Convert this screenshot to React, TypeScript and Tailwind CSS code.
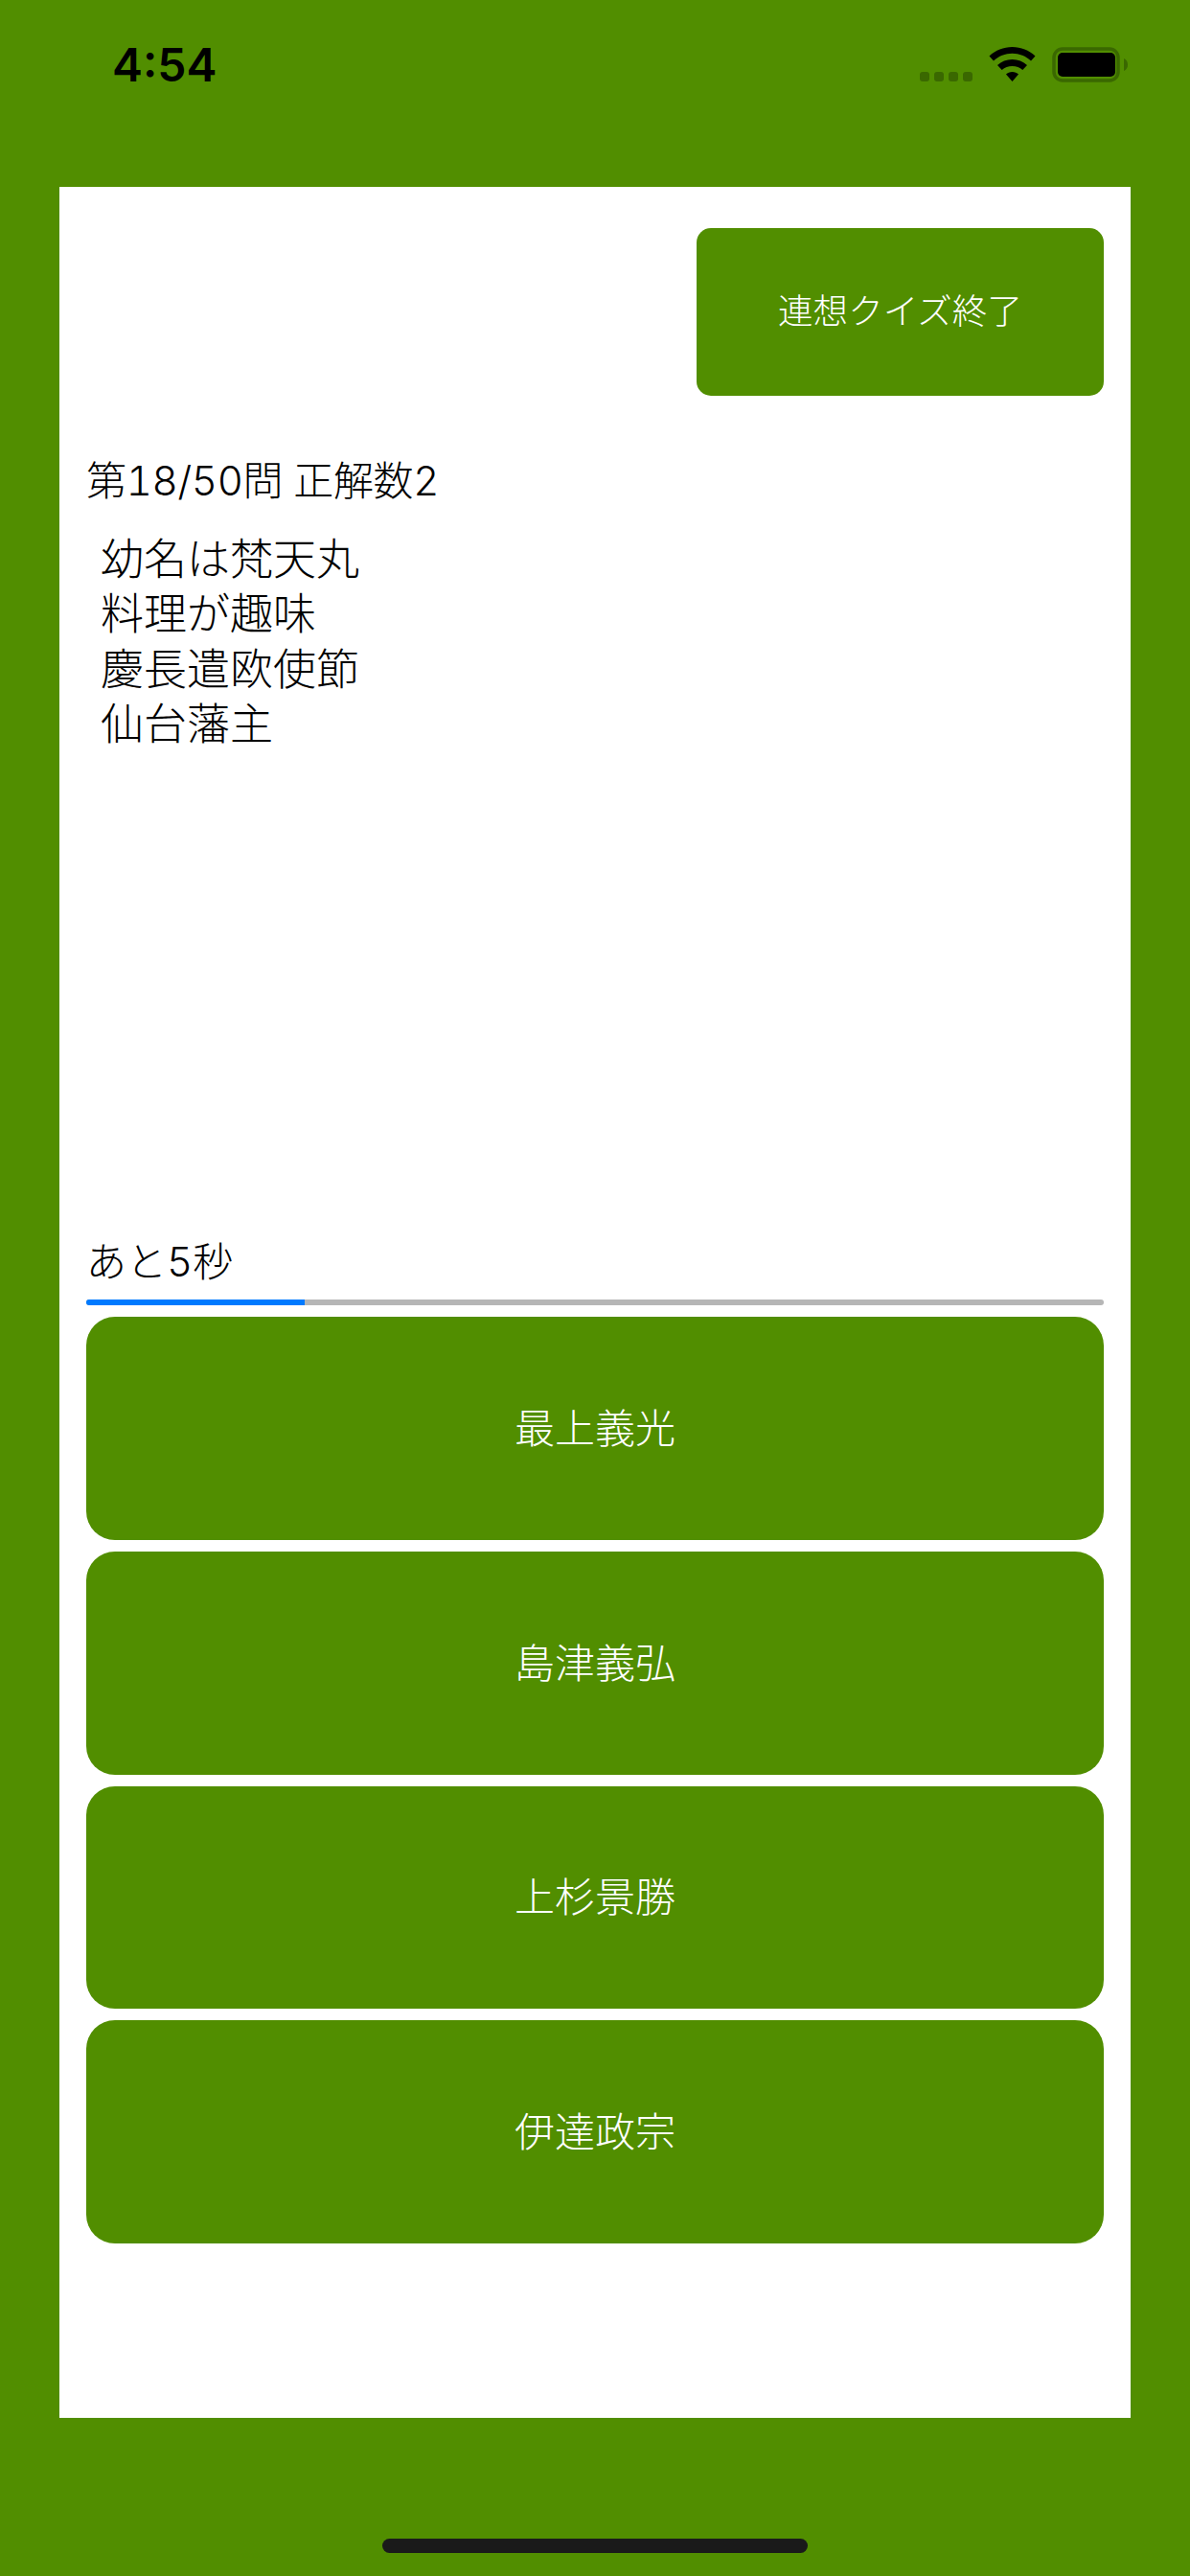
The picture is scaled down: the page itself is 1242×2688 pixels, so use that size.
const CHOICES = ['最上義光', '島津義弘', '上杉景勝', '伊達政宗'];
const HINTS = ['幼名は梵天丸', '料理が趣味', '慶長遣欧使節', '仙台藩主'];

export default function App() {
  return (
    <div className="w-[1242px] h-[2688px] bg-[#518e00] flex flex-col font-['Inter','Noto_Sans_CJK_JP',sans-serif]">
      <StatusBar />

      <main className="mx-[62px] h-[2328px] bg-white px-[28px] flex flex-col">
        <button className="self-end mt-[43px] w-[425px] h-[175px] rounded-[15px] bg-[#518e00] text-white text-[36.6px] font-light">
          連想クイズ終了
        </button>

        <p className="mt-[60px] h-[58px] leading-[58px] text-[42px] tracking-[-0.3px] text-black font-light tabular-nums">第18/50問 正解数2</p>

        <div className="mt-[24px] pl-[15px] text-[45px] leading-[57.25px] text-black font-light">
          {HINTS.map((h) => (
            <p key={h}>{h}</p>
          ))}
        </div>

        <p className="mt-[504px] h-[58px] leading-[58px] text-[42px] text-black font-light tabular-nums">あと5秒</p>

        <div className="mt-[10px] h-[6px] rounded-full bg-[#b6b6b6] overflow-hidden">
          <div className="h-full w-[228px] bg-[#007aff]" />
        </div>

        <div className="mt-[12px] flex flex-col gap-[12px]">
          {CHOICES.map((c) => (
            <button key={c} className="h-[232.75px] rounded-[30px] bg-[#518e00] text-white text-[42px] font-light">
              {c}
            </button>
          ))}
        </div>
      </main>

      {/* home indicator */}
      <div className="flex-1 flex justify-center pt-[126px]">
        <div className="w-[444px] h-[15px] rounded-[8px] bg-[#1a1a1a]" />
      </div>
    </div>
  );
}

function StatusBar() {
  return (
    <div className="h-[195px] shrink-0 pl-[117px] pr-[65px] pt-[49px] flex justify-between items-start">
      <span className="font-['Inter',sans-serif] font-semibold text-[48px] leading-[38px] text-black">4:54</span>
      <div className="flex items-start">
        <div className="mt-[26px] flex gap-[5px]">
          {[0, 1, 2, 3].map((i) => (
            <div key={i} className="w-[10px] h-[10px] rounded-[3px] bg-[#3a6800]" />
          ))}
        </div>
        <svg className="ml-[17px]" width="49" height="36" viewBox="0 0 49 36" fill="#000">
          <path d="M24.5 0C33.5 0 42 3.5 48.5 9.5L44 14.5C38.7 9.6 31.9 6.8 24.5 6.8C17.1 6.8 10.3 9.6 5 14.5L.5 9.5C7 3.5 15.5 0 24.5 0Z" />
          <path d="M24.5 13C30.5 13 35.8 15.2 40 19L35.3 24C32.4 21.5 28.7 20 24.5 20C20.3 20 16.6 21.5 13.7 24L9 19C13.2 15.2 18.5 13 24.5 13Z" />
          <path d="M24.5 26C27 26 29.5 27 31 28.5L24.5 36L18 28.5C19.5 27 22 26 24.5 26Z" />
        </svg>
        <svg className="ml-[17px]" width="79" height="37" viewBox="0 0 79 37">
          <rect x="2" y="2" width="67" height="33" rx="9" fill="none" stroke="#3a6800" strokeWidth="3.5" />
          <rect x="6" y="6" width="60" height="25" rx="5" fill="#000" />
          <path d="M75 12C77.5 13 79 15.5 79 18.5C79 21.5 77.5 24 75 25Z" fill="#3a6800" />
        </svg>
      </div>
    </div>
  );
}
